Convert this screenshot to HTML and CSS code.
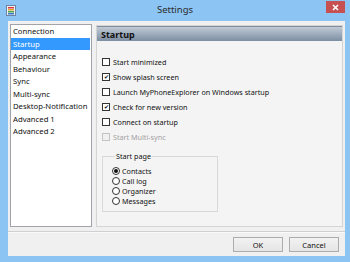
FILE: index.html
```html
<!DOCTYPE html>
<html lang="en">
<head>
    <meta charset="UTF-8">
    <title>Settings</title>
    <link rel="stylesheet" href="styles.css">
</head>
<body>
<div id="window">
    <div id="titlebar">
        <span class="app_icon">
            <svg width="10" height="11" viewBox="0 0 10 11">
                <rect x="0.5" y="0.5" width="9" height="10" fill="#eef2f6" stroke="#6d84a0"/>
                <rect x="2" y="2" width="6" height="1.5" fill="#d83a3a"/>
                <rect x="2" y="4" width="6" height="1.5" fill="#e8a030"/>
                <rect x="2" y="6" width="6" height="1.5" fill="#4aa84a"/>
                <rect x="2" y="8" width="6" height="1.5" fill="#3a78d0"/>
            </svg>
        </span>
        <span id="title">Settings</span>
        <span class="title_right">
            <span id="close_btn">
                <svg width="7" height="7" viewBox="0 0 7 7">
                    <path d="M1 1 L6 6 M6 1 L1 6" stroke="white" stroke-width="1.6"/>
                </svg>
            </span>
        </span>
    </div>
    <div id="client">
        <div id="main">
            <div id="pagelist">
                <div class="pageitem">Connection</div>
                <div class="pageitem selected">Startup</div>
                <div class="pageitem">Appearance</div>
                <div class="pageitem">Behaviour</div>
                <div class="pageitem">Sync</div>
                <div class="pageitem">Multi-sync</div>
                <div class="pageitem">Desktop-Notification</div>
                <div class="pageitem">Advanced 1</div>
                <div class="pageitem">Advanced 2</div>
            </div>
            <div id="panel">
                <div class="panel_header">Startup</div>
                <div class="panel_body">
                    <div class="check_row"><span class="checkbox"></span>Start minimized</div>
                    <div class="check_row"><span class="checkbox checked">&#10004;</span>Show splash screen</div>
                    <div class="check_row"><span class="checkbox"></span>Launch MyPhoneExplorer on Windows startup</div>
                    <div class="check_row"><span class="checkbox checked">&#10004;</span>Check for new version</div>
                    <div class="check_row"><span class="checkbox"></span>Connect on startup</div>
                    <div class="check_row disabled"><span class="checkbox"></span>Start Multi-sync</div>

                    <fieldset class="groupbox">
                        <legend>Start page</legend>
                        <div class="radio_row"><span class="radio checked"></span>Contacts</div>
                        <div class="radio_row"><span class="radio"></span>Call log</div>
                        <div class="radio_row"><span class="radio"></span>Organizer</div>
                        <div class="radio_row"><span class="radio"></span>Messages</div>
                    </fieldset>
                </div>
            </div>
        </div>
        <div class="separator"></div>
        <div id="footer">
            <button class="dlg_btn">OK</button>
            <button class="dlg_btn">Cancel</button>
        </div>
    </div>
</div>
</body>
</html>
```

FILE: styles.css
```css
body {
    margin: 0;
    background-color: #8cc4f4;
    font-family: "Noto Sans", "Open Sans", sans-serif;
    color: #111;
}

#window {
    width: 350px;
    height: 262px;
    display: flex;
    flex-direction: column;
}

#titlebar {
    height: 21px;
    display: grid;
    grid-template-columns: 1fr auto 1fr;
    align-items: start;
}

.app_icon {
    padding: 5px 0 0 6px;
    line-height: 0;
}

#title {
    font-size: 9.5px;
    color: #2b2b2b;
    line-height: 20px;
}

.title_right {
    display: flex;
    justify-content: flex-end;
    padding: 1px 5px 0 0;
}

#close_btn {
    width: 19px;
    height: 12px;
    background-color: #c75050;
    display: flex;
    align-items: center;
    justify-content: center;
}

#client {
    flex: 1;
    margin: 0 5px 6px 8px;
    background-color: #f0f0f0;
    display: flex;
    flex-direction: column;
}

#main {
    display: flex;
    gap: 4px;
    padding: 3px 2px 0 2px;
}

#pagelist {
    box-sizing: border-box;
    width: 82px;
    height: 203px;
    background-color: white;
    border: 1px solid #a0a4aa;
    font-size: 7.7px;
}

.pageitem {
    height: 12.5px;
    line-height: 12.5px;
    padding-left: 2px;
    margin-right: 1px;
    white-space: nowrap;
}

.pageitem.selected {
    background-color: #3399ff;
    color: white;
}

#panel {
    box-sizing: border-box;
    width: 247px;
    height: 202px;
    margin-top: 1px;
    background-color: #f4f4f4;
    border: 1px solid #d4d4d4;
}

.panel_header {
    height: 15px;
    line-height: 15px;
    padding-left: 4px;
    font-size: 9px;
    font-weight: bold;
    color: #111;
    background: linear-gradient(#c0cad5, #7c8ea3);
    border-top: 1px solid #7f8d9c;
    box-sizing: border-box;
}

.panel_body {
    padding: 13px 0 0 5px;
    font-size: 7.2px;
}

.check_row {
    height: 15px;
    display: flex;
    align-items: center;
    gap: 3px;
}

.checkbox {
    box-sizing: border-box;
    width: 8px;
    height: 8px;
    border: 1px solid #333;
    background-color: white;
    font-size: 6px;
    line-height: 6px;
    text-align: center;
    color: #111;
}

.check_row.disabled {
    color: #a2a2a2;
}

.check_row.disabled .checkbox {
    border-color: #c4c4c4;
    background-color: #f0f0f0;
}

.groupbox {
    box-sizing: border-box;
    width: 116px;
    margin: 7px 0 0 0;
    padding: 5px 0 5px 9px;
    border: 1px solid #d8d8d8;
}

.groupbox legend {
    margin-left: 3px;
    padding: 0 1px;
    line-height: 10px;
}

.radio_row {
    height: 10px;
    display: flex;
    align-items: center;
    gap: 2px;
}

.radio {
    box-sizing: border-box;
    width: 8px;
    height: 8px;
    border: 1px solid #333;
    border-radius: 50%;
    background-color: white;
    display: flex;
    align-items: center;
    justify-content: center;
}

.radio.checked::after {
    content: "";
    width: 4px;
    height: 4px;
    border-radius: 50%;
    background-color: #111;
}

.separator {
    margin-top: 4px;
    height: 1px;
    background-color: #d0d0d0;
    border-bottom: 1px solid #fafafa;
}

#footer {
    display: flex;
    justify-content: flex-end;
    gap: 6px;
    padding: 4px 6px 0 0;
}

.dlg_btn {
    width: 50px;
    height: 15px;
    padding: 0;
    font-family: "Noto Sans", "Open Sans", sans-serif;
    font-size: 7.5px;
    color: #111;
    background: linear-gradient(#f2f2f2, #e5e5e5);
    border: 1px solid #acacac;
    border-radius: 0;
}
```
